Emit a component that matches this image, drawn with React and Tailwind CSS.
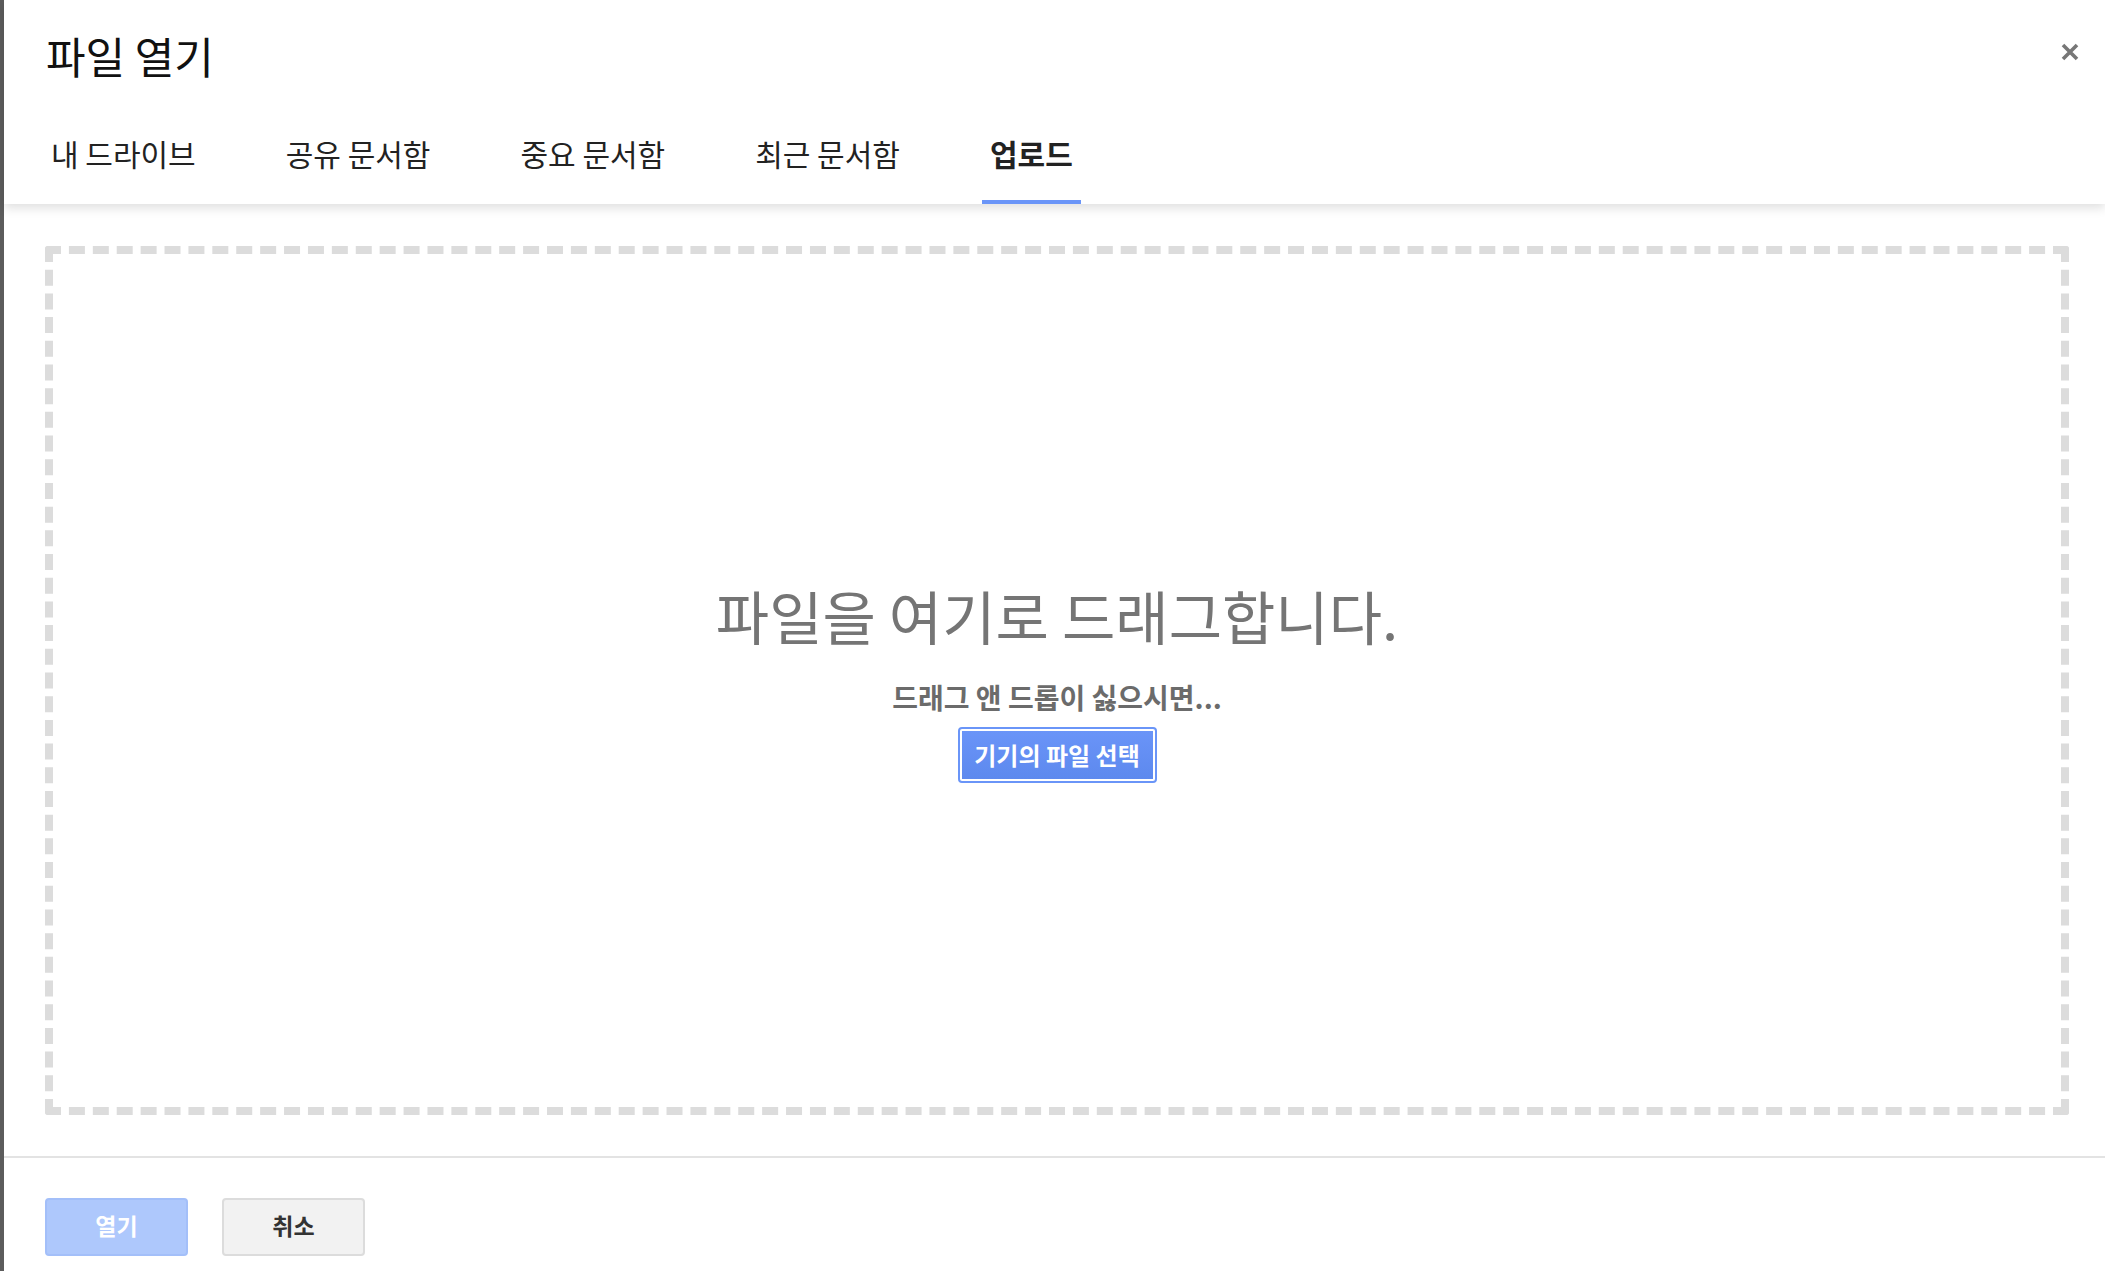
import React from "react";

const font = { fontFamily: '"Noto Sans CJK KR", "Noto Sans", sans-serif' };

const tabs = ["내 드라이브", "공유 문서함", "중요 문서함", "최근 문서함", "업로드"];

const Tab = ({ label, active }) => (
  <div
    className={
      "px-2 pb-[29px] text-[30px] leading-[35px] border-b-4 " +
      (active ? "border-[#6a95f8] font-bold text-[#222]" : "border-transparent text-[#222]")
    }
  >
    {label}
  </div>
);

const CloseIcon = () => (
  <svg width="18" height="18" viewBox="0 0 18 18" className="text-[#777]">
    <path d="M2 2L16 16M16 2L2 16" stroke="currentColor" strokeWidth="3.6" strokeLinecap="butt" />
  </svg>
);

export default function App() {
  return (
    <div className="flex h-[1271px] w-full overflow-hidden bg-[#5c5c5c] pl-[4px]" style={font}>
      <div className="flex flex-1 flex-col bg-white">
        {/* header */}
        <div className="relative z-10 bg-white shadow-[0_4px_10px_rgba(0,0,0,0.13)]">
          <div className="flex items-start justify-between pl-[42px] pr-[26px] pt-[30px]">
            <h1 className="text-[43px] font-normal leading-[50px] text-[#111]">파일 열기</h1>
            <button className="mt-[13px]">
              <CloseIcon />
            </button>
          </div>
          <div className="mt-[56px] flex gap-[74px] pl-[39px]">
            {tabs.map((t) => (
              <Tab key={t} label={t} active={t === "업로드"} />
            ))}
          </div>
        </div>

        {/* drop zone */}
        <div className="ml-[41px] mr-[36px] mt-[42px] mb-[41px] flex h-[869px] flex-col items-center justify-center rounded-[3px] border-8 border-dashed border-[#dcdcdc]">
          <div className="text-[58px] leading-[68px] text-[#757575]">파일을 여기로 드래그합니다.</div>
          <div className="mt-[32px] text-[28px] font-bold leading-[32px] text-[#6b6b6b]">
            드래그 앤 드롭이 싫으시면...
          </div>
          <button className="mt-[16px] flex h-[52px] w-[195px] items-center justify-center rounded-[2px] border-2 border-white bg-gradient-to-b from-[#6a94f8] to-[#5d89ee] text-[24px] font-bold text-white outline-2 outline-solid outline-[#6a95f8]">
            기기의 파일 선택
          </button>
        </div>

        {/* footer */}
        <div className="h-[2px] bg-[#e3e3e3]" />
        <div className="flex gap-[34px] pl-[41px] pt-[40px]">
          <button className="flex h-[58px] w-[143px] items-center justify-center rounded-[4px] border-2 border-[#a3bff9] bg-[#aec8fc] pb-[3px] text-[23px] font-bold text-white">
            열기
          </button>
          <button className="flex h-[58px] w-[143px] items-center justify-center rounded-[4px] border-2 border-[#dcdcdc] bg-[#f2f2f2] pb-[3px] text-[23px] font-bold text-[#333]">
            취소
          </button>
        </div>
      </div>
    </div>
  );
}
